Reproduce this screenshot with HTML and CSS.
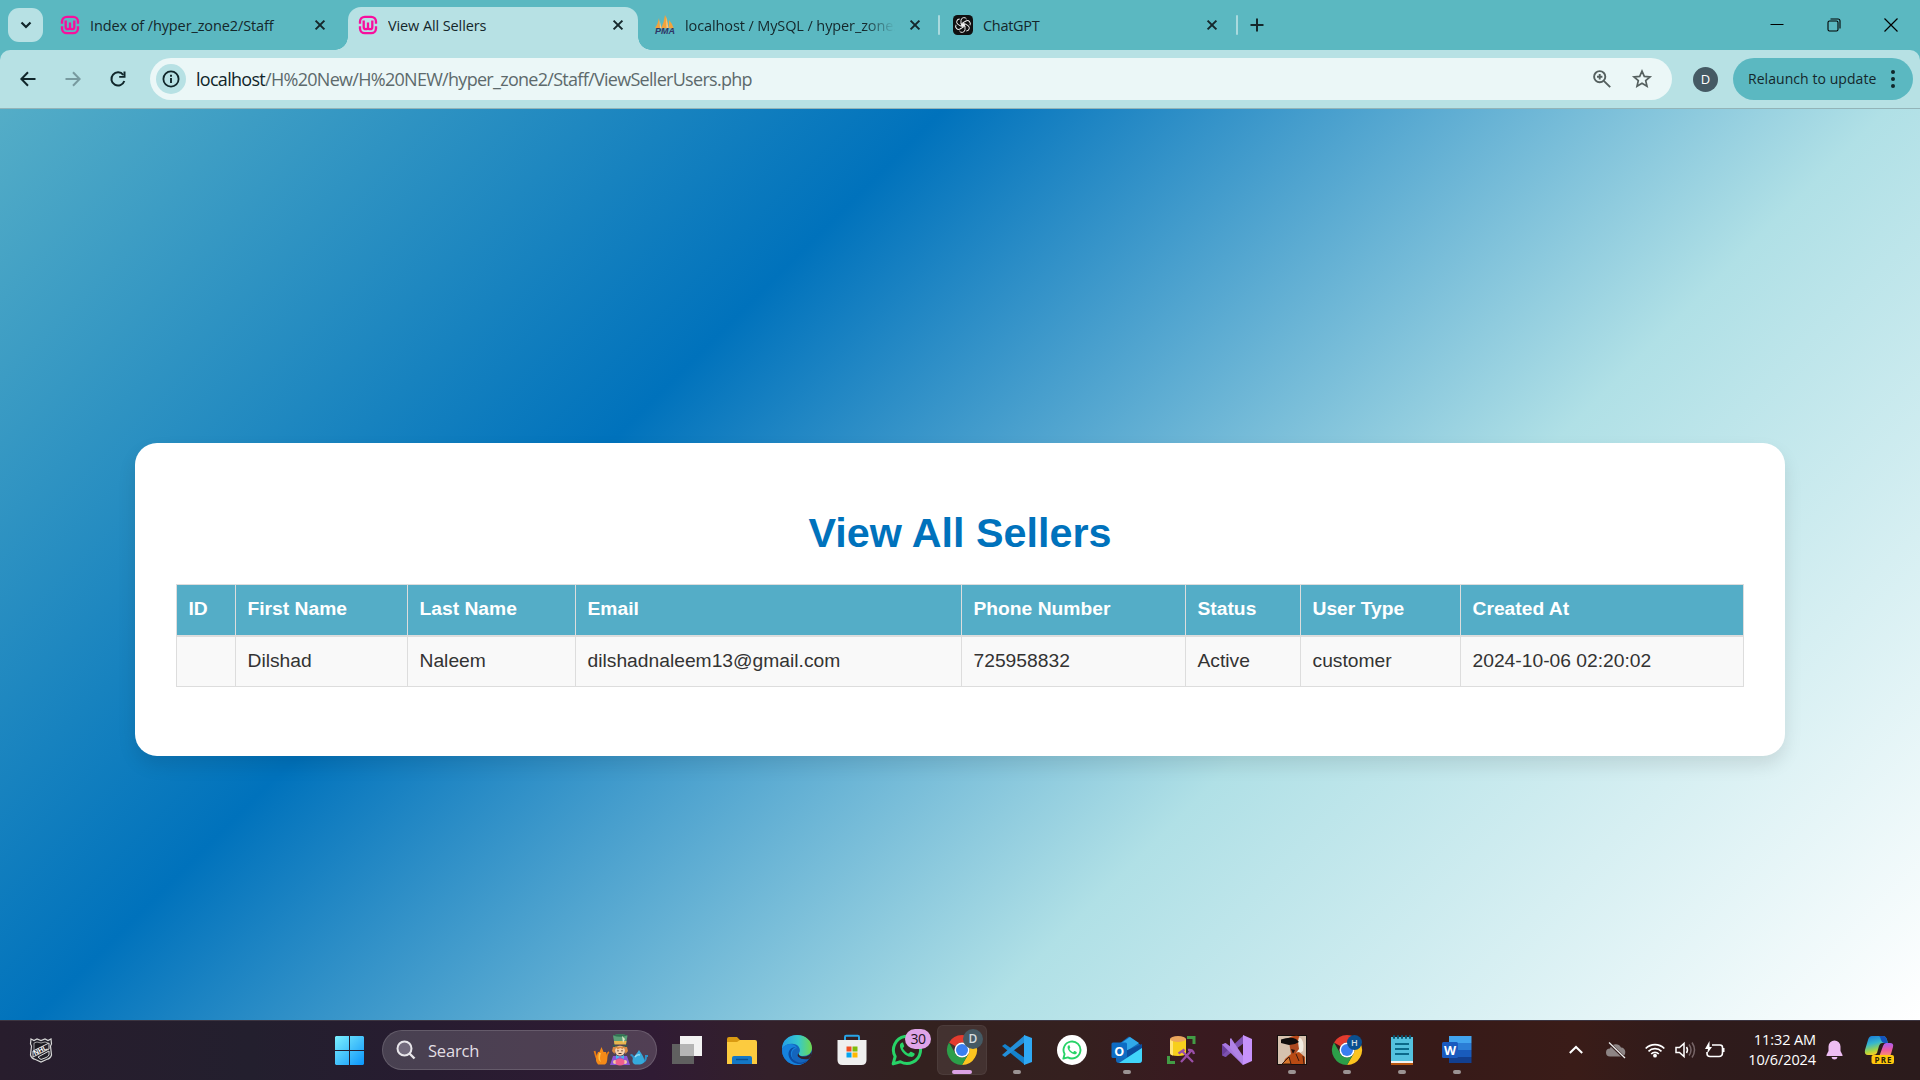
FILE: index.html
```html
<!DOCTYPE html>
<html lang="en">
<head>
<meta charset="utf-8">
<title>View All Sellers</title>
<link rel="stylesheet" href="styles.css">
</head>
<body>
<svg class="defs" width="0" height="0" aria-hidden="true">
  <symbol id="x" viewBox="0 0 12 12"><path d="M1.6 1.6l8.8 8.8M10.4 1.6l-8.8 8.8" stroke="#15282c" stroke-width="2" fill="none"/></symbol>
  <symbol id="wamp" viewBox="0 0 20 20"><g fill="none" stroke="#f70f9d" stroke-width="2.300"><path d="M2 8.800V6.500A4.800 4.800 0 0 1 6.800 1.800H13.200A4.800 4.800 0 0 1 18 6.500V8.800M18 11.200v2.300a4.800 4.800 0 0 1-4.800 4.700H6.800A4.800 4.800 0 0 1 2 13.500v-2.300"/><path d="M5.700 5.500v6.500q0 2.200 2.100 2.200t2.200-2V7.500v4.700q0 2 2.200 2t2.100-2.200V5.500"/></g></symbol>
  <symbol id="chrome" viewBox="0 0 32 32"><path d="M16 1a15 15 0 0 1 13 7.500H16a7.500 7.500 0 0 0-6.500 3.800L3 8.500A15 15 0 0 1 16 1z" fill="#e33b2e"/><path d="M29 8.500A15 15 0 0 1 16 31l6.500-11.300A7.500 7.500 0 0 0 16 8.500z" fill="#fcc41f"/><path d="M3 8.500l6.500 11.200A7.500 7.500 0 0 0 22.500 19.700L16 31A15 15 0 0 1 3 8.500z" fill="#2c9f49"/><circle cx="16" cy="16" r="7.500" fill="#fff"/><circle cx="16" cy="16" r="6" fill="#3a7ff0"/></symbol>
  <symbol id="phone" viewBox="0 0 30 30"><path d="M2 28l1.900-6.900A12.700 12.700 0 1 1 8.800 26z" fill="none" stroke="#27d367" stroke-width="2.800" stroke-linejoin="round"/><path d="M10.500 8c-1.400.2-2.300 1.700-2.100 3.400.5 4.500 5 9.200 9.900 10 1.900.3 3.700-.8 3.900-2.400.1-.8-.1-.9-3.300-2.400-.6-.2-.8 0-1.800 1.300-.5.500-.8.500-2-.2a11 11 0 0 1-3.600-3.600c-.5-.8-.3-1 .3-1.700.7-.9.700-1 .4-1.700C11.300 8.200 11.300 7.900 10.500 8z" fill="#27d367"/></symbol>
</svg>

<header class="tabstrip">
  <button class="tab-search"><svg width="12" height="10" viewBox="0 0 12 10"><path d="M1.500 2.500L6 7l4.500-4.500" fill="none" stroke="#10262a" stroke-width="2.200"/></svg></button>
  <div class="tab tab-first">
    <svg class="fav" width="20" height="20"><use href="#wamp"/></svg>
    <span class="label">Index of /hyper_zone2/Staff</span>
    <svg class="close" width="12" height="12"><use href="#x"/></svg>
  </div>
  <div class="tab active">
    <svg class="fav" width="20" height="20"><use href="#wamp"/></svg>
    <span class="label">View All Sellers</span>
    <svg class="close" width="12" height="12"><use href="#x"/></svg>
  </div>
  <div class="tab tab-pma">
    <svg class="fav" width="22" height="20" viewBox="0 0 22 20"><path d="M1 13Q4 9 5 3l1 10zM7 13.500Q10 8 11 0q3 5 3.500 13zM15 13V5q3 3 5 9z" fill="#f3a33c"/><path d="M5.500 5l2 8H6zM12 2l2.500 11h-2z" fill="#fbc884"/><text x="11" y="19.300" text-anchor="middle" class="pma" textLength="20">PMA</text></svg>
    <span class="label fade">localhost / MySQL / hyper_zone2</span>
    <svg class="close" width="12" height="12"><use href="#x"/></svg>
  </div>
  <i class="sep"></i>
  <div class="tab tab-gpt">
    <svg class="fav" width="20" height="20" viewBox="0 0 20 20"><rect width="20" height="20" rx="4.500" fill="#101010"/><g fill="none" stroke="#f4f4f4" stroke-width=".95"><path id="petal" d="M8 9.200V5.400a3 3 0 0 1 5.600-1.300M8 9.200l3.900 2.300"/><use href="#petal" transform="rotate(60 10 10)"/><use href="#petal" transform="rotate(120 10 10)"/><use href="#petal" transform="rotate(180 10 10)"/><use href="#petal" transform="rotate(240 10 10)"/><use href="#petal" transform="rotate(300 10 10)"/></g></svg>
    <span class="label">ChatGPT</span>
    <svg class="close" width="12" height="12"><use href="#x"/></svg>
  </div>
  <i class="sep"></i>
  <svg class="plus" width="14" height="14" viewBox="0 0 14 14"><path d="M7 .5v13M.5 7h13" stroke="#15282c" stroke-width="2"/></svg>
  <div class="window-buttons">
    <svg width="14" height="14" viewBox="0 0 14 14"><path d="M.5 6.500h13" stroke="#000"/></svg>
    <svg width="14" height="14" viewBox="0 0 14 14"><g fill="none" stroke="#000" stroke-width="1.100"><rect x="1" y="3" width="10" height="10" rx="1.500"/><path d="M3.500 1H11q2 0 2 2v7.500"/></g></svg>
    <svg width="14" height="14" viewBox="0 0 14 14"><path d="M.5.5l13 13M13.500.5l-13 13" stroke="#000" stroke-width="1.200"/></svg>
  </div>
</header>

<div class="toolbar-bed">
<nav class="toolbar">
  <div class="nav-icons">
    <svg width="20" height="20" viewBox="0 0 20 20"><path d="M17.500 10H4M10 3.300L3.400 10 10 16.700" fill="none" stroke="#10262a" stroke-width="2"/></svg>
    <svg width="20" height="20" viewBox="0 0 20 20"><path d="M2.500 10H16M10 3.300l6.600 6.700-6.600 6.700" fill="none" stroke="#789a9f" stroke-width="2"/></svg>
    <svg width="20" height="20" viewBox="0 0 20 20"><path d="M16.300 12A6.600 6.600 0 1 1 15.300 6" fill="none" stroke="#10262a" stroke-width="2"/><path d="M17.500 2.500v6.300h-6.300V6.900h4.300V2.500z" fill="#10262a"/></svg>
  </div>
  <div class="omnibox">
    <span class="info"><svg width="18" height="18" viewBox="0 0 18 18"><circle cx="9" cy="9" r="7.600" fill="none" stroke="#10262a" stroke-width="1.800"/><path d="M9 8v5M9 4.700v2" stroke="#10262a" stroke-width="1.900"/></svg></span>
    <span class="url"><b>localhost</b>/H%20New/H%20NEW/hyper_zone2/Staff/ViewSellerUsers.php</span>
    <svg class="magnify" width="18" height="18" viewBox="0 0 18 18"><circle cx="6.700" cy="6.700" r="5.600" fill="none" stroke="#55605f" stroke-width="1.900"/><path d="M10.800 10.800l6.400 6.400M6.700 4v5.400M4 6.700h5.400" stroke="#55605f" stroke-width="1.900"/></svg>
    <svg width="20" height="20" viewBox="0 0 20 20"><path d="M10 2.200l2.300 5.200 5.700.5-4.300 3.700 1.300 5.600-5-3-5 3 1.300-5.600L2 7.900l5.700-.5z" fill="none" stroke="#55605f" stroke-width="1.700"/></svg>
  </div>
  <span class="avatar">D</span>
  <button class="relaunch"><span>Relaunch to update</span><svg width="6" height="20" viewBox="0 0 6 20"><g fill="#10262a"><circle cx="3" cy="3" r="2"/><circle cx="3" cy="10" r="2"/><circle cx="3" cy="17" r="2"/></g></svg></button>
</nav>
</div>

<main class="page">
  <section class="card">
    <h1>View All Sellers</h1>
    <table>
      <colgroup><col class="c-id"><col class="c-first"><col class="c-last"><col class="c-email"><col class="c-phone"><col class="c-status"><col class="c-type"><col></colgroup>
      <thead><tr><th>ID</th><th>First Name</th><th>Last Name</th><th>Email</th><th>Phone Number</th><th>Status</th><th>User Type</th><th>Created At</th></tr></thead>
      <tbody><tr><td></td><td>Dilshad</td><td>Naleem</td><td>dilshadnaleem13@gmail.com</td><td>725958832</td><td>Active</td><td>customer</td><td>2024-10-06 02:20:02</td></tr></tbody>
    </table>
  </section>
</main>

<footer class="taskbar">
  <div class="widget">
    <svg width="24" height="26" viewBox="0 0 24 26"><path d="M2 2l3 1.500L8 2l4 1.500L16 2l3 1.500L22 2l.5 5-1 2 1 9q-1 3.500-5 4.500L12 25l-5.500-2.500q-4-1-5-4.500l1-9-1-2z" fill="#24212a" stroke="#d8d8d8" stroke-width="1.200"/><path d="M5 6l3-1 4 1 4-1 3 1v3L5 18z" fill="#1b1a20" stroke="#bbb" stroke-width=".8"/><path d="M4 14L20 6v6L4 20zM9 20l11-6v4q-1 2-4 3l-4 1.500z" fill="#24212a" stroke="#ddd" stroke-width="1"/><text class="nhl" transform="translate(6 18.500) rotate(-27)">NHL</text></svg>
  </div>
  <svg class="start" width="29" height="29" viewBox="0 0 29 29"><defs><linearGradient id="win" gradientUnits="userSpaceOnUse" x1="0" y1="0" x2="29" y2="29"><stop stop-color="#7bf0ff"/><stop offset=".5" stop-color="#45c2fb"/><stop offset="1" stop-color="#0a95fb"/></linearGradient></defs><path d="M1 0h13v14H0V1zM15 0h13l1 1v13H15zM0 15h14v14H1l-1-1zM15 15h14v13l-1 1H15z" fill="url(#win)"/></svg>
  <div class="search">
    <svg width="20" height="20" viewBox="0 0 20 20"><circle cx="8.500" cy="8.500" r="7" fill="#726a7c" stroke="#e8e6ea" stroke-width="2"/><path d="M13.500 13.500l5 5" stroke="#e8e6ea" stroke-width="2.400"/></svg>
    <span>Search</span>
    <svg class="teaparty" width="56" height="32" viewBox="0 0 56 32"><path d="M1.500 17q1.500 6 3 9M13 26q1-7 3-8" fill="none" stroke="#e87b13" stroke-width="1.800"/><path d="M8.500 13l2 5h-4zM5 18h8q3 10-1 12.500H5Q1 27 5 18z" fill="#f58a17"/><path d="M6 19h2q-2 5 0 9-4-2-2-9z" fill="#ffc04a"/><path d="M20 1.500Q27-1 34.500 1.500L33 10H21.500z" fill="#5ba077"/><path d="M20 1.500Q27-1 34.500 1.500 27 4 20 1.500z" fill="#2f7351"/><path d="M21 7h12.500l-.5 3.500H21.500z" fill="#e6b64e"/><path d="M29 2l3 3-2 4z" fill="#dfe6c5"/><path d="M19 10.500q8 3 16 0-1 3-8 3t-8-3z" fill="#28694f"/><path d="M20 13l-1 4 2.500 3L23 13zM34 13l1 4-2.500 3L31 13z" fill="#d98a42"/><circle cx="27" cy="16.800" r="5" fill="#f6d2ae"/><path d="M22 12.500h10l-2.500 2.800-2-1.300-3 1.500z" fill="#d98a42"/><path d="M25 16v1.500M29 16v1.500M25.500 19.500h3" stroke="#55372c"/><path d="M20 22h14l3 9H17z" fill="#8c55d8"/><path d="M23 21l4 2 4-2v4l-4-2-4 2z" fill="#48b7e7"/><circle cx="22" cy="28" r="2" fill="#f6c9a5"/><circle cx="32" cy="28" r="2" fill="#f6c9a5"/><ellipse cx="27" cy="28" rx="4.500" ry="3.500" fill="#ee5f8e"/><path d="M37.500 21q3 0 3.500 5M50 28q3-1 3-6h2" fill="none" stroke="#2d91c9" stroke-width="2"/><path d="M46 16l2 3q7 10-1 11.500h-5q-6-3 2-11.500z" fill="#35aadb"/><path d="M42 23q2-3 5-2" fill="none" stroke="#94dcf5" stroke-width="1.500"/></svg>
  </div>
  <div class="apps">
    <div class="app"><svg width="32" height="32" viewBox="0 0 32 32"><path d="M1 10h22v20H1z" fill="#606060"/><path d="M9 2h22v20H9z" fill="#f2f2f2"/><path d="M9 10h14v12H9z" fill="#b5b5b5"/></svg></div>
    <div class="app"><svg width="32" height="32" viewBox="0 0 32 32"><path d="M1 5q0-2 2-2h8l3 3h15v9H1z" fill="#d99a12"/><path d="M1 8h10l3-2h15q2 0 2 2v22H1z" fill="#fccb3f"/><path d="M6 30v-6q0-2 2-2h16q2 0 2 2v6z" fill="#1478c6"/><path d="M10 25.500h12" stroke="#074f92" stroke-width="1.400"/></svg></div>
    <div class="app"><svg width="32" height="32" viewBox="0 0 32 32"><defs><linearGradient id="edge"><stop stop-color="#249ee9"/><stop offset=".55" stop-color="#37c9cb"/><stop offset="1" stop-color="#70d94d"/></linearGradient></defs><circle cx="16" cy="16" r="15" fill="#1465bd"/><path d="M1 15C1 6 8 1 16 1c9 0 15 6 15 13 0 5-4 8-9 8-4 0-5-2-4-3 2-2 1-8-5-9-5-1-10 1-12 5z" fill="url(#edge)"/><path d="M1 15c3-6 12-7 15-1-6 1-7 9-2 13 4 3 9 2 14-2A15 15 0 0 1 1 15z" fill="#1682dd"/><path d="M15 13c-6 2-7 9-2 13s10 3 15-1c-5 8-17 6-20-2-2-6 2-10 7-10z" fill="#0c4ba0"/><path d="M18 19c-1 2 1 3.500 4.500 3.500 4 0 7-2 8-5v4l-3 3.500q-7 1-10-2-2-2 .5-4z" fill="#33202a"/></svg></div>
    <div class="app"><svg width="32" height="32" viewBox="0 0 32 32"><path d="M9 9V3q0-1.200 1.200-1.200h11.600Q23 1.800 23 3v6" fill="none" stroke="#28a5e8" stroke-width="2"/><path d="M1.500 6h29v20q0 5-5 5h-19q-5 0-5-5z" fill="#efefef"/><path d="M10.500 12.500h5v5h-5z" fill="#f04e23"/><path d="M16.500 12.500h5v5h-5z" fill="#80bb0a"/><path d="M10.500 18.500h5v5h-5z" fill="#05a5ef"/><path d="M16.500 18.500h5v5h-5z" fill="#ffb902"/></svg></div>
    <div class="app"><svg width="32" height="32"><use href="#phone" width="32" height="32"/></svg><span class="count">30</span></div>
    <div class="app current"><svg width="32" height="32"><use href="#chrome"/></svg><span class="profile">D</span><i class="wide"></i></div>
    <div class="app"><svg width="32" height="32" viewBox="0 0 32 32"><path d="M1 12l3-2 20 14v7z" fill="#1482cc"/><path d="M1 21l3 2 20-15V1z" fill="#238fd9"/><path d="M23 1l8 3v24l-8 3z" fill="#2fa9f4"/></svg><i></i></div>
    <div class="app"><svg width="32" height="32" viewBox="0 0 32 32"><circle cx="16" cy="16" r="15" fill="#fff"/><use href="#phone" x="6" y="6" width="20" height="20"/></svg></div>
    <div class="app"><svg width="32" height="32" viewBox="0 0 32 32"><path d="M5 12L18 2.500 31 12v14q0 3-3 3H8q-3 0-3-3z" fill="#1267b7"/><path d="M9 10l10-7 9 6-14 9z" fill="#31a9ea"/><path d="M12 18l19-8v4L16 24z" fill="#0b4d9e"/><path d="M8 29L31 14v12q0 3-3 3z" fill="#41d5fa"/><rect x=".5" y="8.500" width="15.500" height="15.500" rx="1.500" fill="#0d6cc4"/><text x="8.200" y="21.500" text-anchor="middle" class="icon-letter">O</text></svg><i></i></div>
    <div class="app"><svg width="32" height="32" viewBox="0 0 32 32"><path d="M4 5v14q0 3 8 3t8-3V5z" fill="#f7cf1d"/><path d="M4 5v14q0 2 3 2.600V6z" fill="#ffe478"/><ellipse cx="12" cy="5" rx="8" ry="3" fill="#eba65d"/><path d="M21 3.500h7V10M9 28.500H2.500V22" fill="none" stroke="#429c45" stroke-width="3"/><path d="M15 28l10-11M16 17l11 11M12.500 19.500l6-4M22 16q5-1 6 4" fill="none" stroke="#9a4fa8" stroke-width="2.300"/></svg></div>
    <div class="app"><svg width="32" height="32" viewBox="0 0 32 32"><path d="M1 10.500L4.500 9 11 14l-6 9-4-2z" fill="#6a3f9c"/><path d="M1 21.500L4.500 23 23 9V1z" fill="#7d52b0"/><path d="M22 1l9 4v22l-9 4z" fill="#c792fb"/><path d="M4.500 9L22 22v9L1 10.500z" fill="#a878e0"/><path d="M10 4l12 18v9L9 14V5z" fill="#b083e6"/></svg></div>
    <div class="app"><svg width="32" height="32" viewBox="0 0 32 32"><path d="M1 1h30v30H1z" fill="#16100f"/><path d="M2 2h28v28H2z" fill="#d6c1ae"/><path d="M12 5q4-4 11-3l2 5-13 1z" fill="#b8481a"/><path d="M23 3q6 3 4 14l-5 3-1-9z" fill="#f2ece1"/><path d="M13 8h9l1 7-4 5h-4z" fill="#ad4a21"/><path d="M5 5.500q9-3 15-.5l3 3-4 2-6 1-8-2z" fill="#100d0d"/><path d="M15 15l4 1-2 4z" fill="#24120d"/><path d="M15 20l8-2 6 5v7H7l2-5z" fill="#b84a13"/><path d="M6 30l7-7 2 7zM20 20l3 7M27 22l1 8" fill="#d8762c" stroke="#3a1a10" stroke-width="1"/></svg><i></i></div>
    <div class="app"><svg width="32" height="32"><use href="#chrome"/></svg><span class="profile profile-h">H</span><i></i></div>
    <div class="app"><svg width="32" height="32" viewBox="0 0 32 32"><path d="M5 28h22v3H5z" fill="#b9570f"/><path d="M5 26h22v3H5z" fill="#f2f2f2"/><path d="M5 3h22v24H5z" fill="#54c2df"/><path d="M9 10h14M9 15h14M9 20h14" stroke="#0b6a8a" stroke-width="2"/><path d="M8 2v2M12 2v2M16 2v2M20 2v2M24 2v2" stroke="#0c5874" stroke-width="2" stroke-linecap="round"/></svg><i></i></div>
    <div class="app"><svg width="32" height="32" viewBox="0 0 32 32"><path d="M8 2h22.500v7H8z" fill="#42a4ef"/><path d="M8 9h22.500v7H8z" fill="#2b7dd6"/><path d="M8 16h22.500v7H8z" fill="#195bbc"/><path d="M8 23h22.500v6H8z" fill="#123f8f"/><rect x="1" y="8" width="16" height="16" rx="1.500" fill="#195abf"/><text x="9" y="20.500" text-anchor="middle" class="icon-letter">W</text></svg><i></i></div>
  </div>
  <div class="tray">
    <svg width="14" height="10" viewBox="0 0 14 10"><path d="M.8 8L7 2l6.200 6" fill="none" stroke="#fff" stroke-width="2"/></svg>
    <svg class="cloud" width="22" height="18" viewBox="0 0 22 18"><path d="M5 15.500a4 4 0 0 1 0-8A6 6 0 0 1 16 6.500a4.600 4.600 0 0 1 1 9z" fill="#8d8484"/><path d="M4 2l15 14.500" stroke="#331a19" stroke-width="3"/><path d="M4 1.500l16 15.500" stroke="#eee" stroke-width="1.300"/></svg>
    <svg class="wifi" width="20" height="16" viewBox="0 0 20 16"><g fill="none" stroke="#fff" stroke-width="1.700"><path d="M.7 6.500a13 13 0 0 1 18.600 0M3.500 9.300a9.200 9.200 0 0 1 13 0M6.200 12a5.400 5.400 0 0 1 7.600 0"/></g><circle cx="10" cy="13.700" r="1.900" fill="#fff"/></svg>
    <svg class="volume" width="21" height="18" viewBox="0 0 21 18"><path d="M1 6.500h3.500L9 2.500v13l-4.500-4H1z" fill="none" stroke="#fff" stroke-width="1.500"/><path d="M11.500 6q2 3 0 6" fill="none" stroke="#fff" stroke-width="1.500"/><path d="M14 3.500q4 5.500 0 11M17 1.500q5 7.500 0 15" fill="none" stroke="#776668" stroke-width="1.500"/></svg>
    <svg class="battery" width="21" height="18" viewBox="0 0 21 18"><path d="M7 4h8q2.500 0 2.500 2.500v5Q17.500 15.500 14 15.500H5q-3 0-3-3V11" fill="none" stroke="#fff" stroke-width="1.600"/><path d="M18 7h1.500v4H18zM4.500 0L0 8h3l-1 5 5-7H4.500z" fill="#fff"/></svg>
    <div class="clock"><span>11:32 AM</span><span>10/6/2024</span></div>
    <svg class="bell" width="17" height="20" viewBox="0 0 17 20"><path d="M8.500.5A6 6 0 0 1 14.500 6.500V11l2 4v1H.5v-1l2-4V6.500a6 6 0 0 1 6-6zM5.500 17h6q-.5 2.500-3 2.500t-3-2.500z" fill="#eebdf3"/></svg>
    <svg class="copilot" width="31" height="30" viewBox="0 0 31 30"><defs><linearGradient id="ca" x2=".3" y2="1"><stop stop-color="#1674d9"/><stop offset=".45" stop-color="#36b7ce"/><stop offset=".8" stop-color="#a5d544"/><stop offset="1" stop-color="#f8cf24"/></linearGradient><linearGradient id="cb" x2="0" y2="1"><stop stop-color="#a95df0"/><stop offset=".5" stop-color="#ee5ba1"/><stop offset="1" stop-color="#ff9d62"/></linearGradient></defs><path d="M8 1h11q3 0 4 4l1 3h-6q-2 0-3 3l-2 7q-1 2-4 2H4q-4 0-3-5L4 5q1-4 4-4z" fill="url(#ca)"/><path d="M15 1h4q3 0 4 4l1 3h-4q-2 0-3-3-.500-3-2-4z" fill="#1455be"/><path d="M22 8h4q4 0 3 4l-2 7q-1 3-4 3h-8l4-11q1-3 3-3z" fill="url(#cb)"/><rect x="7.500" y="20" width="22.500" height="9" rx="2" fill="#ffc80d"/><text x="19" y="27.500" text-anchor="middle" textLength="17" class="pre">PRE</text></svg>
  </div>
</footer>
</body>
</html>
```
FILE: styles.css
```css
* { box-sizing: border-box; }
body {
  margin: 0;
  width: 1920px;
  height: 1080px;
  overflow: hidden;
  display: flex;
  flex-direction: column;
  font-family: "Open Sans", "Noto Sans", sans-serif;
}
.defs { position: absolute; }
svg { display: block; flex: none; overflow: visible; }
button { border: 0; font: inherit; padding: 0; }

/* Browser tab strip */
.tabstrip {
  height: 50px;
  flex: none;
  display: flex;
  align-items: center;
  background: #5bb8c1;
  padding-left: 8px;
}
.tab-search {
  width: 35px;
  height: 34px;
  border-radius: 11px;
  background: #b7e1e4;
  display: flex;
  align-items: center;
  justify-content: center;
}
.tab {
  height: 50px;
  display: flex;
  align-items: center;
}
.tab-first { width: 305px; padding: 0 22px 0 17px; }
.fav { margin-right: 10px; }
.label {
  flex: 1;
  font-size: 14.5px;
  letter-spacing: -0.11px;
  color: #14272b;
  white-space: nowrap;
  overflow: hidden;
}
.fade {
  flex: none;
  width: 210px;
  margin-right: 14px;
  -webkit-mask-image: linear-gradient(90deg, #000 85%, transparent);
  mask-image: linear-gradient(90deg, #000 85%, transparent);
}
.active {
  position: relative;
  width: 290px;
  height: 43px;
  margin: 7px -1px 0 0;
  padding: 0 14px 7px 10px;
  background: #b7e1e4;
  border-radius: 13px 13px 0 0;
}
.active::before, .active::after {
  content: "";
  position: absolute;
  bottom: 0;
  width: 13px;
  height: 13px;
}
.active::before { left: -13px; background: radial-gradient(circle at 0 0, transparent 12.5px, #b7e1e4 13px); }
.active::after { right: -13px; background: radial-gradient(circle at 100% 0, transparent 12.5px, #b7e1e4 13px); }
.pma { font: italic bold 9px "Liberation Sans", sans-serif; fill: #2e3566; }
.tab-pma { width: 301px; padding-left: 17px; }
.tab-pma .fav { margin-right: 9px; }
.sep { width: 2px; height: 20px; background: #a9dade; border-radius: 1px; }
.tab-gpt { width: 296px; padding: 0 18px 0 13px; }
.tab-gpt .label { letter-spacing: -0.3px; }
.plus { margin-left: 12px; }
.window-buttons {
  margin-left: auto;
  padding-right: 22px;
  display: flex;
  gap: 43px;
}

/* Address bar */
.toolbar-bed { background: #5bb8c1; flex: none; }
.toolbar {
  height: 59px;
  display: flex;
  align-items: center;
  background: #b7e1e4;
  border-bottom: 1px solid #93b4b8;
  border-radius: 10px 10px 0 0;
}
.nav-icons {
  width: 150px;
  padding-left: 17.5px;
  display: flex;
  gap: 25px;
}
.omnibox {
  width: 1522px;
  height: 42px;
  border-radius: 21px;
  background: #ebf7f7;
  display: flex;
  align-items: center;
  padding: 0 20px 0 6px;
}
.info {
  width: 30px;
  height: 30px;
  border-radius: 50%;
  background: #b7e1e4;
  display: flex;
  align-items: center;
  justify-content: center;
}
.url {
  flex: 1;
  margin-left: 10px;
  font-size: 18px;
  letter-spacing: -0.71px;
  color: #5d6a6c;
  white-space: nowrap;
}
.url b { font-weight: 400; color: #10262a; }
.magnify { margin-right: 21px; }
.avatar {
  width: 25px;
  height: 25px;
  margin-left: 21px;
  border-radius: 50%;
  background: #455a64;
  color: #fff;
  font-size: 13px;
  line-height: 25px;
  text-align: center;
}
.relaunch {
  width: 180px;
  height: 42px;
  margin-left: 15px;
  border-radius: 21px;
  background: #5bb8c1;
  display: flex;
  align-items: center;
  justify-content: space-between;
  padding: 0 17px 1px 15px;
  font-size: 14px;
  letter-spacing: 0.06px;
  color: #14272b;
  white-space: nowrap;
}

/* Page content */
.page {
  height: 911px;
  flex: none;
  padding-top: 334px;
  background: linear-gradient(135deg, #54adc7, #0072bc, #b0e0e6, #fff);
  font-family: Arial, "Liberation Sans", sans-serif;
}
.card {
  width: 1650px;
  height: 313px;
  margin: 0 auto;
  padding: 67px 41px 0;
  background: #fff;
  border-radius: 22px;
  box-shadow: 0 9px 18px rgba(0, 0, 0, .1);
}
h1 {
  margin: 0 0 28px;
  font-size: 41.3px;
  line-height: 46px;
  text-align: center;
  color: #0072bc;
}
table {
  width: 1568px;
  table-layout: fixed;
  border-collapse: separate;
  border-spacing: 0;
  border: solid #ddd;
  border-width: 1px 0 0 1px;
  font-size: 19.25px;
  line-height: 22px;
  color: #333;
}
th, td {
  padding: 0 0 2px 11.5px;
  text-align: left;
  border: solid #ddd;
  border-width: 0 1px 1px 0;
  white-space: nowrap;
}
th { height: 52px; background: #54adc7; color: #fff; border-bottom-width: 2px; }
td { height: 50px; background: #f9f9f9; }
.c-id { width: 59px; }
.c-first { width: 172px; }
.c-last { width: 168px; }
.c-email { width: 386px; }
.c-phone { width: 224px; }
.c-status { width: 115px; }
.c-type { width: 160px; }

/* Windows taskbar */
.taskbar {
  height: 60px;
  flex: none;
  display: flex;
  align-items: center;
  padding-bottom: 1px;
  background: linear-gradient(90deg, #281d2d, #231f2e 13%, #271c30 22%, #301b34 34%, #33202a 40%, #33211f 48%, #35201f 56%, #391a20 62%, #371a18 75%, #3a1c18 82%, #2f1b1b 88%, #2b1b1c);
  border-top: 1px solid #3c3541;
}
.widget { width: 335px; padding-left: 29px; }
.nhl { font: bold 7px "Liberation Sans", sans-serif; fill: #fff; }
.search {
  width: 275px;
  height: 40px;
  margin-left: 18px;
  border-radius: 20px;
  background: rgba(255, 255, 255, .16);
  border: 1px solid rgba(255, 255, 255, .14);
  display: flex;
  align-items: center;
  padding: 0 7px 0 13px;
  font-size: 16.5px;
  letter-spacing: -0.2px;
  color: #e2dfe4;
}
.search span { margin-left: 12px; }
.teaparty { margin-left: auto; }
.apps { display: flex; margin-left: 2px; }
.app {
  position: relative;
  width: 55px;
  height: 50px;
  display: flex;
  align-items: center;
  justify-content: center;
}
.current::before {
  content: "";
  position: absolute;
  inset: 0 2.5px;
  border-radius: 6px;
  background: rgba(255, 255, 255, .08);
  border: 1px solid rgba(255, 255, 255, .05);
}
.app svg { position: relative; }
.app i {
  position: absolute;
  left: 23.5px;
  bottom: 1px;
  width: 8px;
  height: 4px;
  border-radius: 2px;
  background: #9b9393;
}
.app .wide { left: 17.5px; width: 20px; background: #dba2e5; }
.count {
  position: absolute;
  left: 26px;
  top: 4px;
  width: 26px;
  height: 20px;
  border-radius: 10px;
  background: #dfa4e8;
  color: #1d1320;
  font-size: 14px;
  line-height: 20px;
  text-align: center;
  letter-spacing: -0.5px;
}
.profile {
  position: absolute;
  left: 29px;
  top: 4px;
  width: 20px;
  height: 20px;
  border-radius: 50%;
  background: #455a64;
  color: #d5dde0;
  font-size: 12px;
  font-weight: 600;
  line-height: 20px;
  text-align: center;
}
.profile-h {
  top: 10px;
  left: 28px;
  width: 15px;
  height: 15px;
  line-height: 15px;
  background: #0a4f8f;
  font-size: 9px;
}
.icon-letter { font: bold 12.5px "Open Sans", sans-serif; fill: #fff; }
.tray {
  margin-left: auto;
  display: flex;
  align-items: center;
  padding-right: 25px;
}
.cloud { margin-left: 22px; }
.wifi { margin-left: 18px; }
.volume { margin-left: 10px; }
.battery { margin-left: 9px; }
.clock {
  width: 90px;
  display: flex;
  flex-direction: column;
  align-items: flex-end;
  font-size: 14.5px;
  line-height: 20px;
  color: #fff;
  letter-spacing: -0.1px;
}
.bell { margin-left: 10px; }
.copilot { margin-left: 21px; }
.pre { font: bold 8px "Open Sans", sans-serif; fill: #2a2106; }
```
